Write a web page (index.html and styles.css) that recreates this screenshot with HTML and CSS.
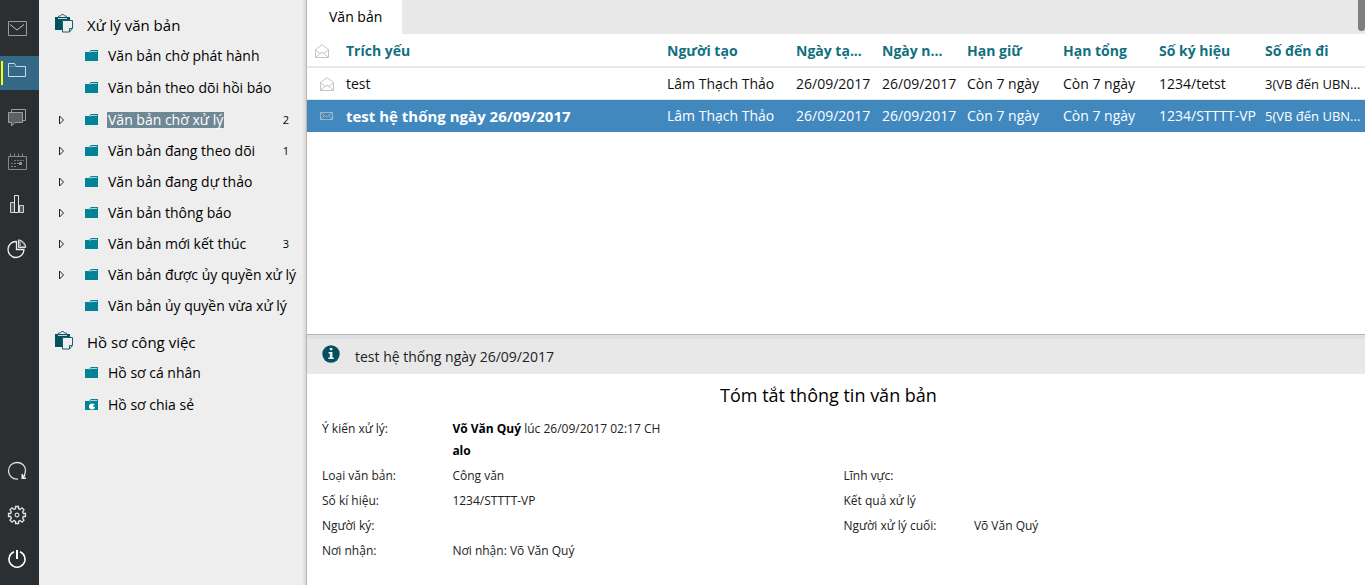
FILE: index.html
```html
<!DOCTYPE html>
<html lang="vi">
<head>
<meta charset="utf-8">
<title>Xử lý văn bản</title>
<link rel="stylesheet" href="styles.css">
</head>
<body>
<svg class="sprite" aria-hidden="true">
  <symbol id="folder" viewBox="0 0 13 11"><path fill="#028297" d="M0 2h4l2-2h7v11H0z"/><path fill="none" stroke="#a9d4dc" d="M4.500 2.500 6 1.500h6"/></symbol>
  <symbol id="clip" viewBox="0 0 18 19">
    <path fill="#03505f" d="M0 3h15v4H7v9H0z"/>
    <path fill="none" stroke="#2d6f7b" d="M3.500 3.500v-1.500h2l1-1.500h2l1 1.500h2v1.500"/>
    <path stroke="#c5d6d9" d="M3 4.500h9"/>
    <path fill="#eee" stroke="#17606d" d="M7.500 6.500h10v8l-3 3.500h-7z"/>
    <path fill="none" stroke="#17606d" d="M17.500 14.500h-3V18"/>
  </symbol>
  <symbol id="arrow" viewBox="0 0 7 10"><path fill="none" stroke="#222" d="M1.500 1 5.500 5 1.500 9z"/></symbol>
  <symbol id="open-mail" viewBox="0 0 14 14"><path fill="none" stroke="#c4c4c4" d="M.500 5.500 7 .600l6.500 4.900v8H.500zM.500 5.500l4.500 4L.500 13.500M13.500 5.500 9 9.500l4.500 4M5 9.500l2-1 2 1"/></symbol>
  <symbol id="mail" viewBox="0 0 13 8"><path fill="none" stroke="#9eb4c8" d="M.500.500h12v7H.500zM.500.500l6 4.500 6-4.500M.500 7.500l4-4M12.500 7.500l-4-4"/></symbol>
</svg>
<div class="app">
  <nav class="rail" aria-label="Chức năng">
    <button class="rail-btn" aria-label="Thư"><svg width="20" height="16" viewBox="0 0 20 16"><path fill="none" stroke="#999c9e" d="M1.500.500h18v14h-18z"/><path fill="none" stroke="#bfc1c2" d="m3 3.500 7 5.500 7-5.500"/></svg></button>
    <button class="rail-btn active" aria-label="Văn bản"><svg width="20" height="20" viewBox="0 0 20 20"><path fill="none" stroke="#c8dce6" d="M1.500 13.500V.500h6l2 3h9v10z"/><path stroke="#c8dce6" d="M1.500 3.500h8"  opacity=".3"/></svg></button>
    <button class="rail-btn" aria-label="Trao đổi"><svg width="20" height="20" viewBox="0 0 20 20"><path fill="none" stroke="#9c9e9f" d="M4.500 5V2.500h14v11H16"/><path fill="#5c6060" stroke="#9c9e9f" d="M1.500 5.500h14v10H8l-3.500 3.500v-3.500h-3z"/></svg></button>
    <button class="rail-btn" aria-label="Lịch"><svg width="20" height="18" viewBox="0 0 20 18"><path fill="none" stroke="#85898b" d="M1.500 4.500h18v13h-18z"/><path stroke="#85898b" stroke-dasharray="1 3" stroke-width="3" d="M3 3h15"/><path stroke="#7b7f81" stroke-dasharray="2 1" d="M7 8.500h10M4 11.500h12M4 14.500h6"/><path fill="none" stroke="#a0a3a5" d="M12.500 12.500v-2h2v2z"/></svg></button>
    <button class="rail-btn" aria-label="Thống kê"><svg width="16" height="20" viewBox="0 0 16 20"><path fill="#555a5c" stroke="#d2d3d4" d="M1.500 7.500h4v10h-4zM10.500 10.500h4v7h-4z"/><path fill="#2b2f32" stroke="#e6e6e6" d="M5.500.500h4v17h-4z"/></svg></button>
    <button class="rail-btn" aria-label="Báo cáo"><svg width="20" height="20" viewBox="0 0 20 20"><path fill="none" stroke="#eee" stroke-width="1.300" d="M9.500 2.500A8 8 0 1 0 17 10.500H9.500z"/><path fill="#8a8d8f" stroke="#ddd" d="M11.500.800a8 8 0 0 1 7.300 7.700h-7.300z"/><path fill="#2b2f32" d="M14 3a6 6 0 0 1 3 4h-3z"/></svg></button>
    <span class="spacer"></span>
    <button class="rail-btn" aria-label="Tải lại"><svg width="20" height="20" viewBox="0 0 20 20"><path fill="none" stroke="#ddd" stroke-width="1.300" d="M11 18C5 18.500 1.500 14 1.500 10 1.500 5 5 1.500 10 1.500S18.500 5 18.500 9.500c0 3-1 5-2.500 7"/><path fill="#eee" d="M14.500 13v5h4.500v-1.500h-2l1.500-2-1-1-1.500 2V13z"/></svg></button>
    <button class="rail-btn" aria-label="Cài đặt"><svg width="20" height="20" viewBox="0 0 20 20"><path fill="none" stroke="#e4e4e4" stroke-width="1.300" d="M8.500 1.500h3v2.200l1.500.700 2-1.600 2 2-1.400 2 .7 1.700h2.200v3h-2.200l-.7 1.700 1.400 2-2 2-2-1.600-1.500.7v2.200h-3v-2.200l-1.500-.7-2 1.600-2-2 1.400-2-.7-1.700H1.500v-3h2.200l.7-1.700-1.400-2 2-2 2 1.600 1.500-.7z"/><circle cx="10" cy="10" r="2" fill="none" stroke="#fff"/></svg></button>
    <button class="rail-btn" aria-label="Thoát"><svg width="20" height="20" viewBox="0 0 20 20"><path fill="none" stroke="#fff" stroke-width="1.500" d="M7 2.800a8 8 0 1 0 6 0"/><path stroke="#fff" stroke-width="2" d="M10 1v9"/></svg></button>
  </nav>

  <aside class="sidebar">
    <h2 class="root"><svg width="18" height="19"><use href="#clip"/></svg>Xử lý văn bản</h2>
    <ul class="tree">
      <li class="node leaf"><svg class="folder"><use href="#folder"/></svg><a href="#">Văn bản chờ phát hành</a></li>
      <li class="node leaf"><svg class="folder"><use href="#folder"/></svg><a href="#">Văn bản theo dõi hồi báo</a></li>
      <li class="node"><button class="toggle" aria-label="Mở rộng"><svg width="7" height="10"><use href="#arrow"/></svg></button><svg class="folder"><use href="#folder"/></svg><a href="#" class="selected">Văn bản chờ xử lý</a><span class="count">2</span></li>
      <li class="node"><button class="toggle" aria-label="Mở rộng"><svg width="7" height="10"><use href="#arrow"/></svg></button><svg class="folder"><use href="#folder"/></svg><a href="#">Văn bản đang theo dõi</a><span class="count">1</span></li>
      <li class="node"><button class="toggle" aria-label="Mở rộng"><svg width="7" height="10"><use href="#arrow"/></svg></button><svg class="folder"><use href="#folder"/></svg><a href="#">Văn bản đang dự thảo</a></li>
      <li class="node"><button class="toggle" aria-label="Mở rộng"><svg width="7" height="10"><use href="#arrow"/></svg></button><svg class="folder"><use href="#folder"/></svg><a href="#">Văn bản thông báo</a></li>
      <li class="node"><button class="toggle" aria-label="Mở rộng"><svg width="7" height="10"><use href="#arrow"/></svg></button><svg class="folder"><use href="#folder"/></svg><a href="#">Văn bản mới kết thúc</a><span class="count">3</span></li>
      <li class="node"><button class="toggle" aria-label="Mở rộng"><svg width="7" height="10"><use href="#arrow"/></svg></button><svg class="folder"><use href="#folder"/></svg><a href="#">Văn bản được ủy quyền xử lý</a></li>
      <li class="node leaf"><svg class="folder"><use href="#folder"/></svg><a href="#">Văn bản ủy quyền vừa xử lý</a></li>
    </ul>
    <h2 class="root"><svg width="18" height="19"><use href="#clip"/></svg>Hồ sơ công việc</h2>
    <ul class="tree">
      <li class="node leaf"><svg class="folder"><use href="#folder"/></svg><a href="#">Hồ sơ cá nhân</a></li>
      <li class="node leaf"><svg class="folder"><use href="#folder"/><circle cx="7" cy="7.500" r="3" fill="#fff"/><circle cx="9" cy="7" r="1" fill="#028297"/></svg><a href="#">Hồ sơ chia sẻ</a></li>
    </ul>
  </aside>

  <main class="content">
    <section class="list">
      <div class="tabs"><button class="tab">Văn bản</button></div>
      <table class="grid">
        <colgroup><col class="c-icon"><col><col class="c-user"><col class="c-date"><col class="c-received"><col class="c-term"><col class="c-term"><col class="c-code"><col class="c-num"></colgroup>
        <thead>
          <tr><th><svg width="14" height="14"><use href="#open-mail"/></svg></th><th>Trích yếu</th><th>Người tạo</th><th>Ngày tạ...</th><th>Ngày n...</th><th>Hạn giữ</th><th>Hạn tổng</th><th>Số ký hiệu</th><th>Số đến đi</th></tr>
        </thead>
        <tbody>
          <tr><td><svg width="14" height="14"><use href="#open-mail"/></svg></td><td>test</td><td>Lâm Thạch Thảo</td><td>26/09/2017</td><td>26/09/2017</td><td>Còn 7 ngày</td><td>Còn 7 ngày</td><td>1234/tetst</td><td class="num">3(VB đến UBN...</td></tr>
          <tr class="current"><td><svg width="13" height="8"><use href="#mail"/></svg></td><td class="subject">test hệ thống ngày 26/09/2017</td><td>Lâm Thạch Thảo</td><td>26/09/2017</td><td>26/09/2017</td><td>Còn 7 ngày</td><td>Còn 7 ngày</td><td>1234/STTTT-VP</td><td class="num">5(VB đến UBN...</td></tr>
        </tbody>
      </table>
      <span class="thumb"></span>
    </section>
    <section class="detail">
      <header class="detail-head">
        <svg width="18" height="18" viewBox="0 0 18 18"><circle cx="9" cy="9" r="8.700" fill="#03505f"/><path fill="#e8eef0" d="M7.800 3h2.600v2.200H7.800zM6.500 7h4v5.500h1.300V14H6.300v-1.500h1.500v-4H6.500z"/></svg>
        <span>test hệ thống ngày 26/09/2017</span>
      </header>
      <h1 class="title">Tóm tắt thông tin văn bản</h1>
      <dl class="info">
        <dt>Ý kiến xử lý:</dt><dd class="wide"><b>Võ Văn Quý</b> lúc 26/09/2017 02:17 CH<br><b>alo</b></dd>
        <dt>Loại văn bản:</dt><dd>Công văn</dd><dt>Lĩnh vực:</dt><dd></dd>
        <dt>Số kí hiệu:</dt><dd>1234/STTTT-VP</dd><dt>Kết quả xử lý</dt><dd></dd>
        <dt>Người ký:</dt><dd></dd><dt>Người xử lý cuối:</dt><dd>Võ Văn Quý</dd>
        <dt>Nơi nhận:</dt><dd class="wide">Nơi nhận: Võ Văn Quý</dd>
      </dl>
    </section>
  </main>
</div>
</body>
</html>
```
FILE: styles.css
```css
* { box-sizing: border-box; }
body {
  margin: 0;
  font-family: Tahoma, "Open Sans", "Noto Sans", sans-serif;
  font-size: 14px;
  color: #111;
  background: #fff;
}
button { border: 0; padding: 0; background: none; font: inherit; color: inherit; }
a { color: inherit; text-decoration: none; }
ul, dl, dd, h1, h2 { margin: 0; padding: 0; list-style: none; font-weight: normal; }
.sprite { display: none; }
.app { display: flex; height: 100vh; overflow: hidden; }

.rail {
  flex: 0 0 39px;
  display: flex;
  flex-direction: column;
  gap: 10px;
  padding: 12px 0 9px;
  background: #2b2f32;
}
.rail-btn {
  height: 34px;
  padding-right: 5px;
  display: flex;
  align-items: center;
  justify-content: center;
}
.rail-btn.active { position: relative; background: #336986; }
.rail-btn.active::before {
  content: "";
  position: absolute;
  left: 1px;
  top: 5px;
  width: 2px;
  height: 24px;
  background: #ff0;
}
.spacer { flex: 1; margin: -10px 0; }

.sidebar {
  flex: 0 0 268px;
  padding-top: 10px;
  background: linear-gradient(to right, transparent 263px, #d8d6d4 267px) #eee;
  border-right: 1px solid #bcb5b3;
  color: #000;
}
.root {
  display: flex;
  align-items: center;
  height: 30px;
  padding-left: 16px;
  gap: 14px;
  font-size: 15px;
}
.root svg { margin-bottom: 4px; }
.tree + .root { margin-top: 5px; }
.node { display: flex; align-items: center; height: 31px; padding-left: 19px; }
.node.leaf { height: 32px; padding: 0 0 2px 46px; }
.toggle { width: 27px; height: 20px; display: flex; align-items: center; }
.folder { flex: none; width: 13px; height: 11px; margin-right: 10px; }
.node a { white-space: nowrap; }
.node .selected { background: #6f8896; color: #fff; line-height: 16px; padding: 0 1px; margin-left: -1px; }
.count { margin-left: auto; padding-right: 17px; font-size: 11px; }

.content { flex: 1; min-width: 0; display: flex; flex-direction: column; }
.list { position: relative; flex: 0 0 57.2%; border-bottom: 1px solid #b5b5b5; overflow: hidden; }
.tabs { display: flex; height: 34px; background: #e8e8e8; }
.tab { padding: 0 20px 2px 22px; background: #fff; color: #000; }
.thumb {
  position: absolute;
  right: 0;
  top: 0;
  width: 7px;
  height: 31px;
  background: #7f7f7f;
  border-radius: 0 0 4px 4px;
}
.grid { width: 100%; table-layout: fixed; border-collapse: separate; border-spacing: 0; }
.c-icon { width: 39px; }
.c-user { width: 129px; }
.c-date { width: 86px; }
.c-received { width: 85px; }
.c-term { width: 96px; }
.c-code { width: 106px; }
.c-num { width: 100px; }
.grid th, .grid td { height: 32px; padding: 0; text-align: left; white-space: nowrap; line-height: 20px; }
.grid th { height: 34px; padding-top: 2px; color: #11707f; font-weight: bold; border-bottom: 2px solid #e8e8e8; }
.grid td { border-bottom: 1px solid #e8e8e8; }
.grid svg { display: block; margin-left: 8px; }
.grid td svg { margin-left: 13px; }
.grid .current td { background: #4188bf; color: #fff; border-bottom-color: #4188bf; }
.grid .subject { font-weight: bold; font-size: 15px; }
.grid .num { font-size: 13px; }

.detail { flex: 1; min-height: 0; overflow: hidden; }
.detail-head {
  display: flex;
  align-items: center;
  gap: 15px;
  height: 39px;
  padding: 0 15px;
  background: #e8e8e8;
  border-top: 4px solid #dfe0e4;
  color: #222;
}
.detail-head svg { margin-bottom: 4px; }
.title { padding: 8px 15px 0 0; font-size: 18px; line-height: 26px; text-align: center; color: #000; }
.info {
  display: grid;
  grid-template-columns: 1fr 3fr 1fr 3fr;
  row-gap: 3px;
  padding: 10px 0 0 15px;
  font-size: 12px;
  line-height: 22px;
  color: #222;
}
.info .wide { grid-column: 2 / -1; }
.info b { color: #000; }
```
